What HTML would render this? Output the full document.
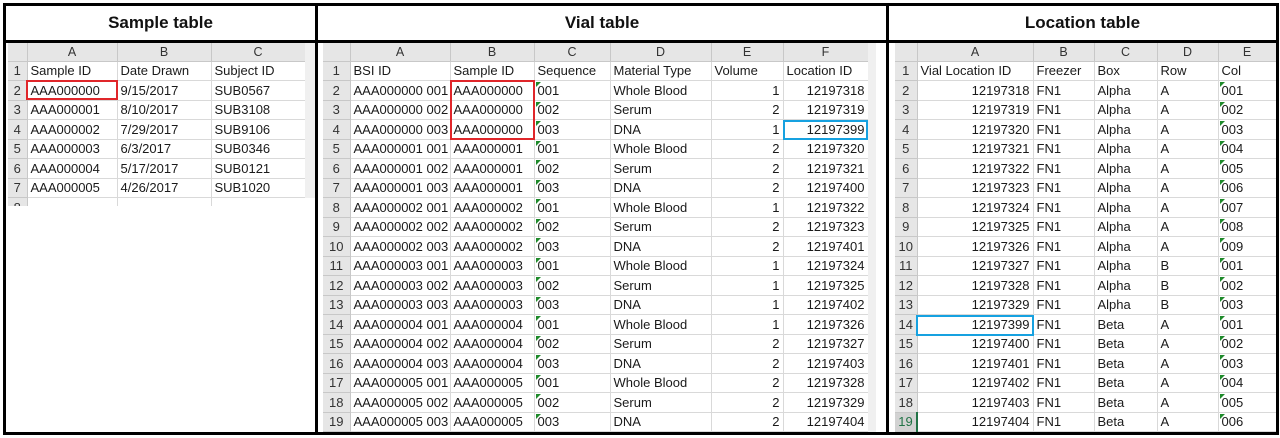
<!DOCTYPE html>
<html><head><meta charset="utf-8"><style>
*{margin:0;padding:0;box-sizing:border-box}
body{width:1280px;height:438px;background:#fff;position:relative;overflow:hidden;font-family:"Liberation Sans",sans-serif;color:#1a1a1a}
.ln{position:absolute;background:#000}
.title{position:absolute;top:5px;height:36px;line-height:36px;text-align:center;font-weight:bold;font-size:17px;color:#111}
.clip{position:absolute;overflow:hidden}
table{border-collapse:collapse;table-layout:fixed;font-size:13px}
td{height:19.5px;border-right:1px solid #d9d9d9;border-bottom:1px solid #d9d9d9;padding:0 3px;white-space:nowrap;overflow:hidden;position:relative}
tr.h td{height:18px;background:#e6e6e6;text-align:center;border-color:#c8c8c8;color:#333;font-size:12.5px}
td.rh{background:#e6e6e6;text-align:center;border-color:#c8c8c8;padding:0;color:#333}
td.r{text-align:right}
td.g::before{content:"";position:absolute;left:1px;top:1px;border-top:5px solid #1e8a2a;border-right:5px solid transparent}
.box{position:absolute;border:2px solid #e0262a}
.bb{position:absolute;border:2px solid #16a1e0}
.corner{background:#e6e6e6}
</style></head><body>
<!-- outer lines -->
<div class="ln" style="left:3px;top:3px;width:1275px;height:3px"></div>
<div class="ln" style="left:3px;top:40px;width:1275px;height:3px"></div>
<div class="ln" style="left:3px;top:432px;width:1275px;height:3px"></div>
<div class="ln" style="left:3px;top:3px;width:3px;height:432px"></div>
<div class="ln" style="left:315px;top:3px;width:3px;height:432px"></div>
<div class="ln" style="left:886px;top:3px;width:3px;height:432px"></div>
<div class="ln" style="left:1276px;top:3px;width:3px;height:432px"></div>
<div class="title" style="left:6px;width:309px">Sample table</div>
<div class="title" style="left:318px;width:568px">Vial table</div>
<div class="title" style="left:889px;width:387px">Location table</div>

<div style="position:absolute;left:305px;top:43px;width:10px;height:155px;background:#f0f0f0"></div>
<div class="clip" style="left:8px;top:43px;width:297px;height:163px">
<table style="width:297px"><colgroup><col style="width:19px"><col style="width:90px"><col style="width:94px"><col style="width:94px"></colgroup>
<tr class="h"><td class="corner"></td><td>A</td><td>B</td><td>C</td></tr>
<tr><td class="rh">1</td><td>Sample ID</td><td>Date Drawn</td><td>Subject ID</td></tr>
<tr><td class="rh">2</td><td>AAA000000</td><td>9/15/2017</td><td>SUB0567</td></tr>
<tr><td class="rh">3</td><td>AAA000001</td><td>8/10/2017</td><td>SUB3108</td></tr>
<tr><td class="rh">4</td><td>AAA000002</td><td>7/29/2017</td><td>SUB9106</td></tr>
<tr><td class="rh">5</td><td>AAA000003</td><td>6/3/2017</td><td>SUB0346</td></tr>
<tr><td class="rh">6</td><td>AAA000004</td><td>5/17/2017</td><td>SUB0121</td></tr>
<tr><td class="rh">7</td><td>AAA000005</td><td>4/26/2017</td><td>SUB1020</td></tr>
<tr><td class="rh">8</td><td></td><td></td><td></td></tr>
</table></div>
<div class="box" style="left:26px;top:80px;width:92px;height:20px"></div>

<div style="position:absolute;left:868px;top:43px;width:8px;height:389px;background:#f0f0f0"></div>
<div class="clip" style="left:323px;top:43px;width:545px;height:389px">
<table style="width:545px"><colgroup><col style="width:27px"><col style="width:100px"><col style="width:84px"><col style="width:76px"><col style="width:101px"><col style="width:72px"><col style="width:85px"></colgroup>
<tr class="h"><td class="corner"></td><td>A</td><td>B</td><td>C</td><td>D</td><td>E</td><td>F</td></tr>
<tr><td class="rh">1</td><td>BSI ID</td><td>Sample ID</td><td>Sequence</td><td>Material Type</td><td>Volume</td><td>Location ID</td></tr>
<tr><td class="rh">2</td><td>AAA000000 001</td><td>AAA000000</td><td class="g">001</td><td>Whole Blood</td><td class="r">1</td><td class="r">12197318</td></tr>
<tr><td class="rh">3</td><td>AAA000000 002</td><td>AAA000000</td><td class="g">002</td><td>Serum</td><td class="r">2</td><td class="r">12197319</td></tr>
<tr><td class="rh">4</td><td>AAA000000 003</td><td>AAA000000</td><td class="g">003</td><td>DNA</td><td class="r">1</td><td class="r">12197399</td></tr>
<tr><td class="rh">5</td><td>AAA000001 001</td><td>AAA000001</td><td class="g">001</td><td>Whole Blood</td><td class="r">2</td><td class="r">12197320</td></tr>
<tr><td class="rh">6</td><td>AAA000001 002</td><td>AAA000001</td><td class="g">002</td><td>Serum</td><td class="r">2</td><td class="r">12197321</td></tr>
<tr><td class="rh">7</td><td>AAA000001 003</td><td>AAA000001</td><td class="g">003</td><td>DNA</td><td class="r">2</td><td class="r">12197400</td></tr>
<tr><td class="rh">8</td><td>AAA000002 001</td><td>AAA000002</td><td class="g">001</td><td>Whole Blood</td><td class="r">1</td><td class="r">12197322</td></tr>
<tr><td class="rh">9</td><td>AAA000002 002</td><td>AAA000002</td><td class="g">002</td><td>Serum</td><td class="r">2</td><td class="r">12197323</td></tr>
<tr><td class="rh">10</td><td>AAA000002 003</td><td>AAA000002</td><td class="g">003</td><td>DNA</td><td class="r">2</td><td class="r">12197401</td></tr>
<tr><td class="rh">11</td><td>AAA000003 001</td><td>AAA000003</td><td class="g">001</td><td>Whole Blood</td><td class="r">1</td><td class="r">12197324</td></tr>
<tr><td class="rh">12</td><td>AAA000003 002</td><td>AAA000003</td><td class="g">002</td><td>Serum</td><td class="r">1</td><td class="r">12197325</td></tr>
<tr><td class="rh">13</td><td>AAA000003 003</td><td>AAA000003</td><td class="g">003</td><td>DNA</td><td class="r">1</td><td class="r">12197402</td></tr>
<tr><td class="rh">14</td><td>AAA000004 001</td><td>AAA000004</td><td class="g">001</td><td>Whole Blood</td><td class="r">1</td><td class="r">12197326</td></tr>
<tr><td class="rh">15</td><td>AAA000004 002</td><td>AAA000004</td><td class="g">002</td><td>Serum</td><td class="r">2</td><td class="r">12197327</td></tr>
<tr><td class="rh">16</td><td>AAA000004 003</td><td>AAA000004</td><td class="g">003</td><td>DNA</td><td class="r">2</td><td class="r">12197403</td></tr>
<tr><td class="rh">17</td><td>AAA000005 001</td><td>AAA000005</td><td class="g">001</td><td>Whole Blood</td><td class="r">2</td><td class="r">12197328</td></tr>
<tr><td class="rh">18</td><td>AAA000005 002</td><td>AAA000005</td><td class="g">002</td><td>Serum</td><td class="r">2</td><td class="r">12197329</td></tr>
<tr><td class="rh">19</td><td>AAA000005 003</td><td>AAA000005</td><td class="g">003</td><td>DNA</td><td class="r">2</td><td class="r">12197404</td></tr>
</table></div>
<div class="box" style="left:450px;top:80px;width:85px;height:60px"></div>
<div class="bb" style="left:783px;top:120px;width:85px;height:20px"></div>

<div class="clip" style="left:895px;top:43px;width:381px;height:389px">
<table style="width:381px"><colgroup><col style="width:22px"><col style="width:116px"><col style="width:61px"><col style="width:63px"><col style="width:61px"><col style="width:58px"></colgroup>
<tr class="h"><td class="corner"></td><td>A</td><td>B</td><td>C</td><td>D</td><td>E</td></tr>
<tr><td class="rh">1</td><td>Vial Location ID</td><td>Freezer</td><td>Box</td><td>Row</td><td>Col</td></tr>
<tr><td class="rh">2</td><td class="r">12197318</td><td>FN1</td><td>Alpha</td><td>A</td><td class="g">001</td></tr>
<tr><td class="rh">3</td><td class="r">12197319</td><td>FN1</td><td>Alpha</td><td>A</td><td class="g">002</td></tr>
<tr><td class="rh">4</td><td class="r">12197320</td><td>FN1</td><td>Alpha</td><td>A</td><td class="g">003</td></tr>
<tr><td class="rh">5</td><td class="r">12197321</td><td>FN1</td><td>Alpha</td><td>A</td><td class="g">004</td></tr>
<tr><td class="rh">6</td><td class="r">12197322</td><td>FN1</td><td>Alpha</td><td>A</td><td class="g">005</td></tr>
<tr><td class="rh">7</td><td class="r">12197323</td><td>FN1</td><td>Alpha</td><td>A</td><td class="g">006</td></tr>
<tr><td class="rh">8</td><td class="r">12197324</td><td>FN1</td><td>Alpha</td><td>A</td><td class="g">007</td></tr>
<tr><td class="rh">9</td><td class="r">12197325</td><td>FN1</td><td>Alpha</td><td>A</td><td class="g">008</td></tr>
<tr><td class="rh">10</td><td class="r">12197326</td><td>FN1</td><td>Alpha</td><td>A</td><td class="g">009</td></tr>
<tr><td class="rh">11</td><td class="r">12197327</td><td>FN1</td><td>Alpha</td><td>B</td><td class="g">001</td></tr>
<tr><td class="rh">12</td><td class="r">12197328</td><td>FN1</td><td>Alpha</td><td>B</td><td class="g">002</td></tr>
<tr><td class="rh">13</td><td class="r">12197329</td><td>FN1</td><td>Alpha</td><td>B</td><td class="g">003</td></tr>
<tr><td class="rh">14</td><td class="r">12197399</td><td>FN1</td><td>Beta</td><td>A</td><td class="g">001</td></tr>
<tr><td class="rh">15</td><td class="r">12197400</td><td>FN1</td><td>Beta</td><td>A</td><td class="g">002</td></tr>
<tr><td class="rh">16</td><td class="r">12197401</td><td>FN1</td><td>Beta</td><td>A</td><td class="g">003</td></tr>
<tr><td class="rh">17</td><td class="r">12197402</td><td>FN1</td><td>Beta</td><td>A</td><td class="g">004</td></tr>
<tr><td class="rh">18</td><td class="r">12197403</td><td>FN1</td><td>Beta</td><td>A</td><td class="g">005</td></tr>
<tr><td class="rh" style="color:#217346;background:#d2d2d2;border-right:2px solid #217346">19</td><td class="r">12197404</td><td>FN1</td><td>Beta</td><td>A</td><td class="g">006</td></tr>
</table></div>
<div class="bb" style="left:916px;top:315px;width:118px;height:21px"></div>
</body></html>
